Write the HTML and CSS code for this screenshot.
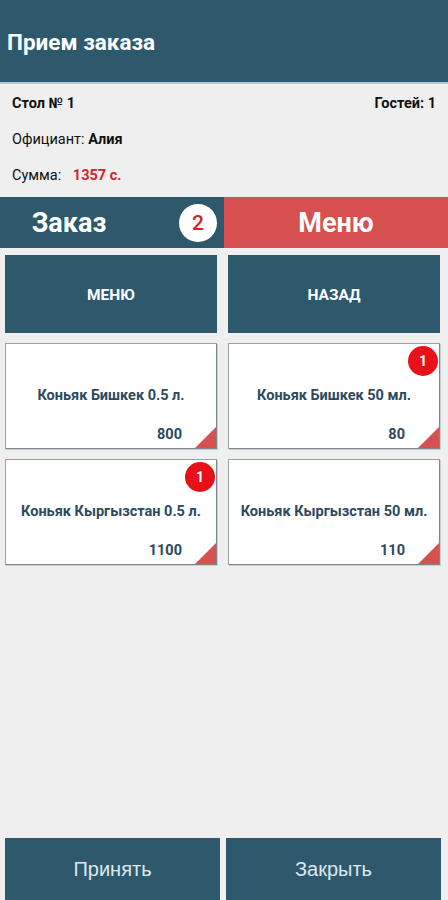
FILE: index.html
```html
<!DOCTYPE html>
<html lang="ru">
<head>
<meta charset="utf-8">
<title>Прием заказа</title>
<link rel="stylesheet" href="styles.css">
</head>
<body>
<div class="app">
  <header class="topbar"><h1 class="title">Прием заказа</h1></header>
  <section class="info">
    <div class="info-row">
      <span class="b">Стол № 1</span>
      <span class="b">Гостей: 1</span>
    </div>
    <div class="info-row">
      <span>Официант: <span class="b">Алия</span></span>
    </div>
    <div class="info-row">
      <span>Сумма: <span class="sum">1357 с.</span></span>
    </div>
  </section>
  <nav class="tabs">
    <div class="tab tab-order"><span class="tab-label">Заказ</span><span class="tab-badge">2</span></div>
    <div class="tab tab-menu"><span class="tab-label">Меню</span></div>
  </nav>
  <main class="grid">
    <div class="nav-btn">МЕНЮ</div>
    <div class="nav-btn">НАЗАД</div>
    <div class="card">
      <div class="card-name">Коньяк Бишкек 0.5 л.</div>
      <div class="card-price">800</div>
      <span class="corner"></span>
    </div>
    <div class="card">
      <span class="count">1</span>
      <div class="card-name">Коньяк Бишкек 50 мл.</div>
      <div class="card-price">80</div>
      <span class="corner"></span>
    </div>
    <div class="card">
      <span class="count">1</span>
      <div class="card-name">Коньяк Кыргызстан 0.5 л.</div>
      <div class="card-price">1100</div>
      <span class="corner"></span>
    </div>
    <div class="card">
      <div class="card-name">Коньяк Кыргызстан 50 мл.</div>
      <div class="card-price">110</div>
      <span class="corner"></span>
    </div>
  </main>
  <footer class="actions">
    <div class="action">Принять</div>
    <div class="action">Закрыть</div>
  </footer>
</div>
</body>
</html>
```
FILE: styles.css
```css
* { box-sizing: border-box; }
html, body { margin: 0; padding: 0; }
body {
  width: 448px;
  height: 900px;
  background: #efefef;
  font-family: Roboto, "Liberation Sans", Arial, sans-serif;
  overflow: hidden;
}
.app {
  display: flex;
  flex-direction: column;
  height: 900px;
}
.topbar {
  height: 84px;
  background: #2e596d;
  border-bottom: 2px solid #b8c8d0;
  display: flex;
  align-items: center;
  padding: 2px 7px 0 7px;
}
.title {
  margin: 0;
  color: #fff;
  font-size: 22.5px;
  font-weight: 700;
}
.info {
  height: 113px;
  padding: 1px 12px 0 12px;
  font-size: 14.5px;
  color: #111;
}
.info-row {
  display: flex;
  justify-content: space-between;
  height: 36px;
  align-items: center;
}
.b { font-weight: 700; }
.sum {
  color: #d2232a;
  font-weight: 700;
  margin-left: 8px;
}
.tabs {
  display: flex;
  height: 51px;
}
.tab {
  width: 50%;
  display: flex;
  align-items: center;
  color: #fff;
  font-size: 27px;
  font-weight: 700;
}
.tab-order {
  background: #2e596d;
  padding-right: 7px;
}
.tab-order .tab-label {
  width: 138px;
  text-align: center;
}
.tab-badge {
  margin-left: auto;
  width: 38px;
  height: 38px;
  border-radius: 50%;
  background: #fff;
  color: #d2232a;
  font-size: 21px;
  font-weight: 500;
  display: flex;
  align-items: center;
  justify-content: center;
}
.tab-menu {
  background: #d65050;
  justify-content: center;
}
.grid {
  display: grid;
  grid-template-columns: 1fr 1fr;
  grid-auto-rows: 106px;
  grid-template-rows: 78px;
  column-gap: 11px;
  row-gap: 10px;
  padding: 7px 8px 0 5px;
  flex: 1;
  align-content: start;
}
.nav-btn {
  background: #2e596d;
  color: #fff;
  font-weight: 700;
  font-size: 15.5px;
  display: flex;
  align-items: center;
  justify-content: center;
  padding-top: 2px;
}
.card {
  position: relative;
  background: #fff;
  border: 1px solid #9aa3a8;
  border-right-color: #7e878c;
  border-bottom-color: #7e878c;
  box-shadow: 1px 1px 0 #c8cdd0;
  display: flex;
  align-items: center;
  justify-content: center;
  overflow: hidden;
}
.card-name {
  color: #2d4a5c;
  font-weight: 700;
  font-size: 14.5px;
  text-align: center;
  padding-bottom: 2px;
  white-space: nowrap;
}
.card-price {
  position: absolute;
  right: 34px;
  bottom: 5px;
  color: #2d4a5c;
  font-weight: 700;
  font-size: 14.5px;
}
.corner {
  position: absolute;
  right: 0;
  bottom: 0;
  width: 0;
  height: 0;
  border-style: solid;
  border-width: 0 0 21px 21px;
  border-color: transparent transparent #d65050 transparent;
}
.count {
  position: absolute;
  top: 2px;
  right: 1px;
  width: 30px;
  height: 30px;
  border-radius: 50%;
  background: #e8111a;
  color: #fff;
  font-size: 14px;
  font-weight: 700;
  display: flex;
  align-items: center;
  justify-content: center;
}
.actions {
  display: flex;
  gap: 6px;
  padding: 0 7px 0 5px;
  height: 62px;
}
.action {
  flex: 1;
  background: #2e596d;
  color: #dfe8ee;
  font-size: 20px;
  display: flex;
  align-items: center;
  justify-content: center;
  font-family: "Liberation Sans", Arial, sans-serif;
}
```
